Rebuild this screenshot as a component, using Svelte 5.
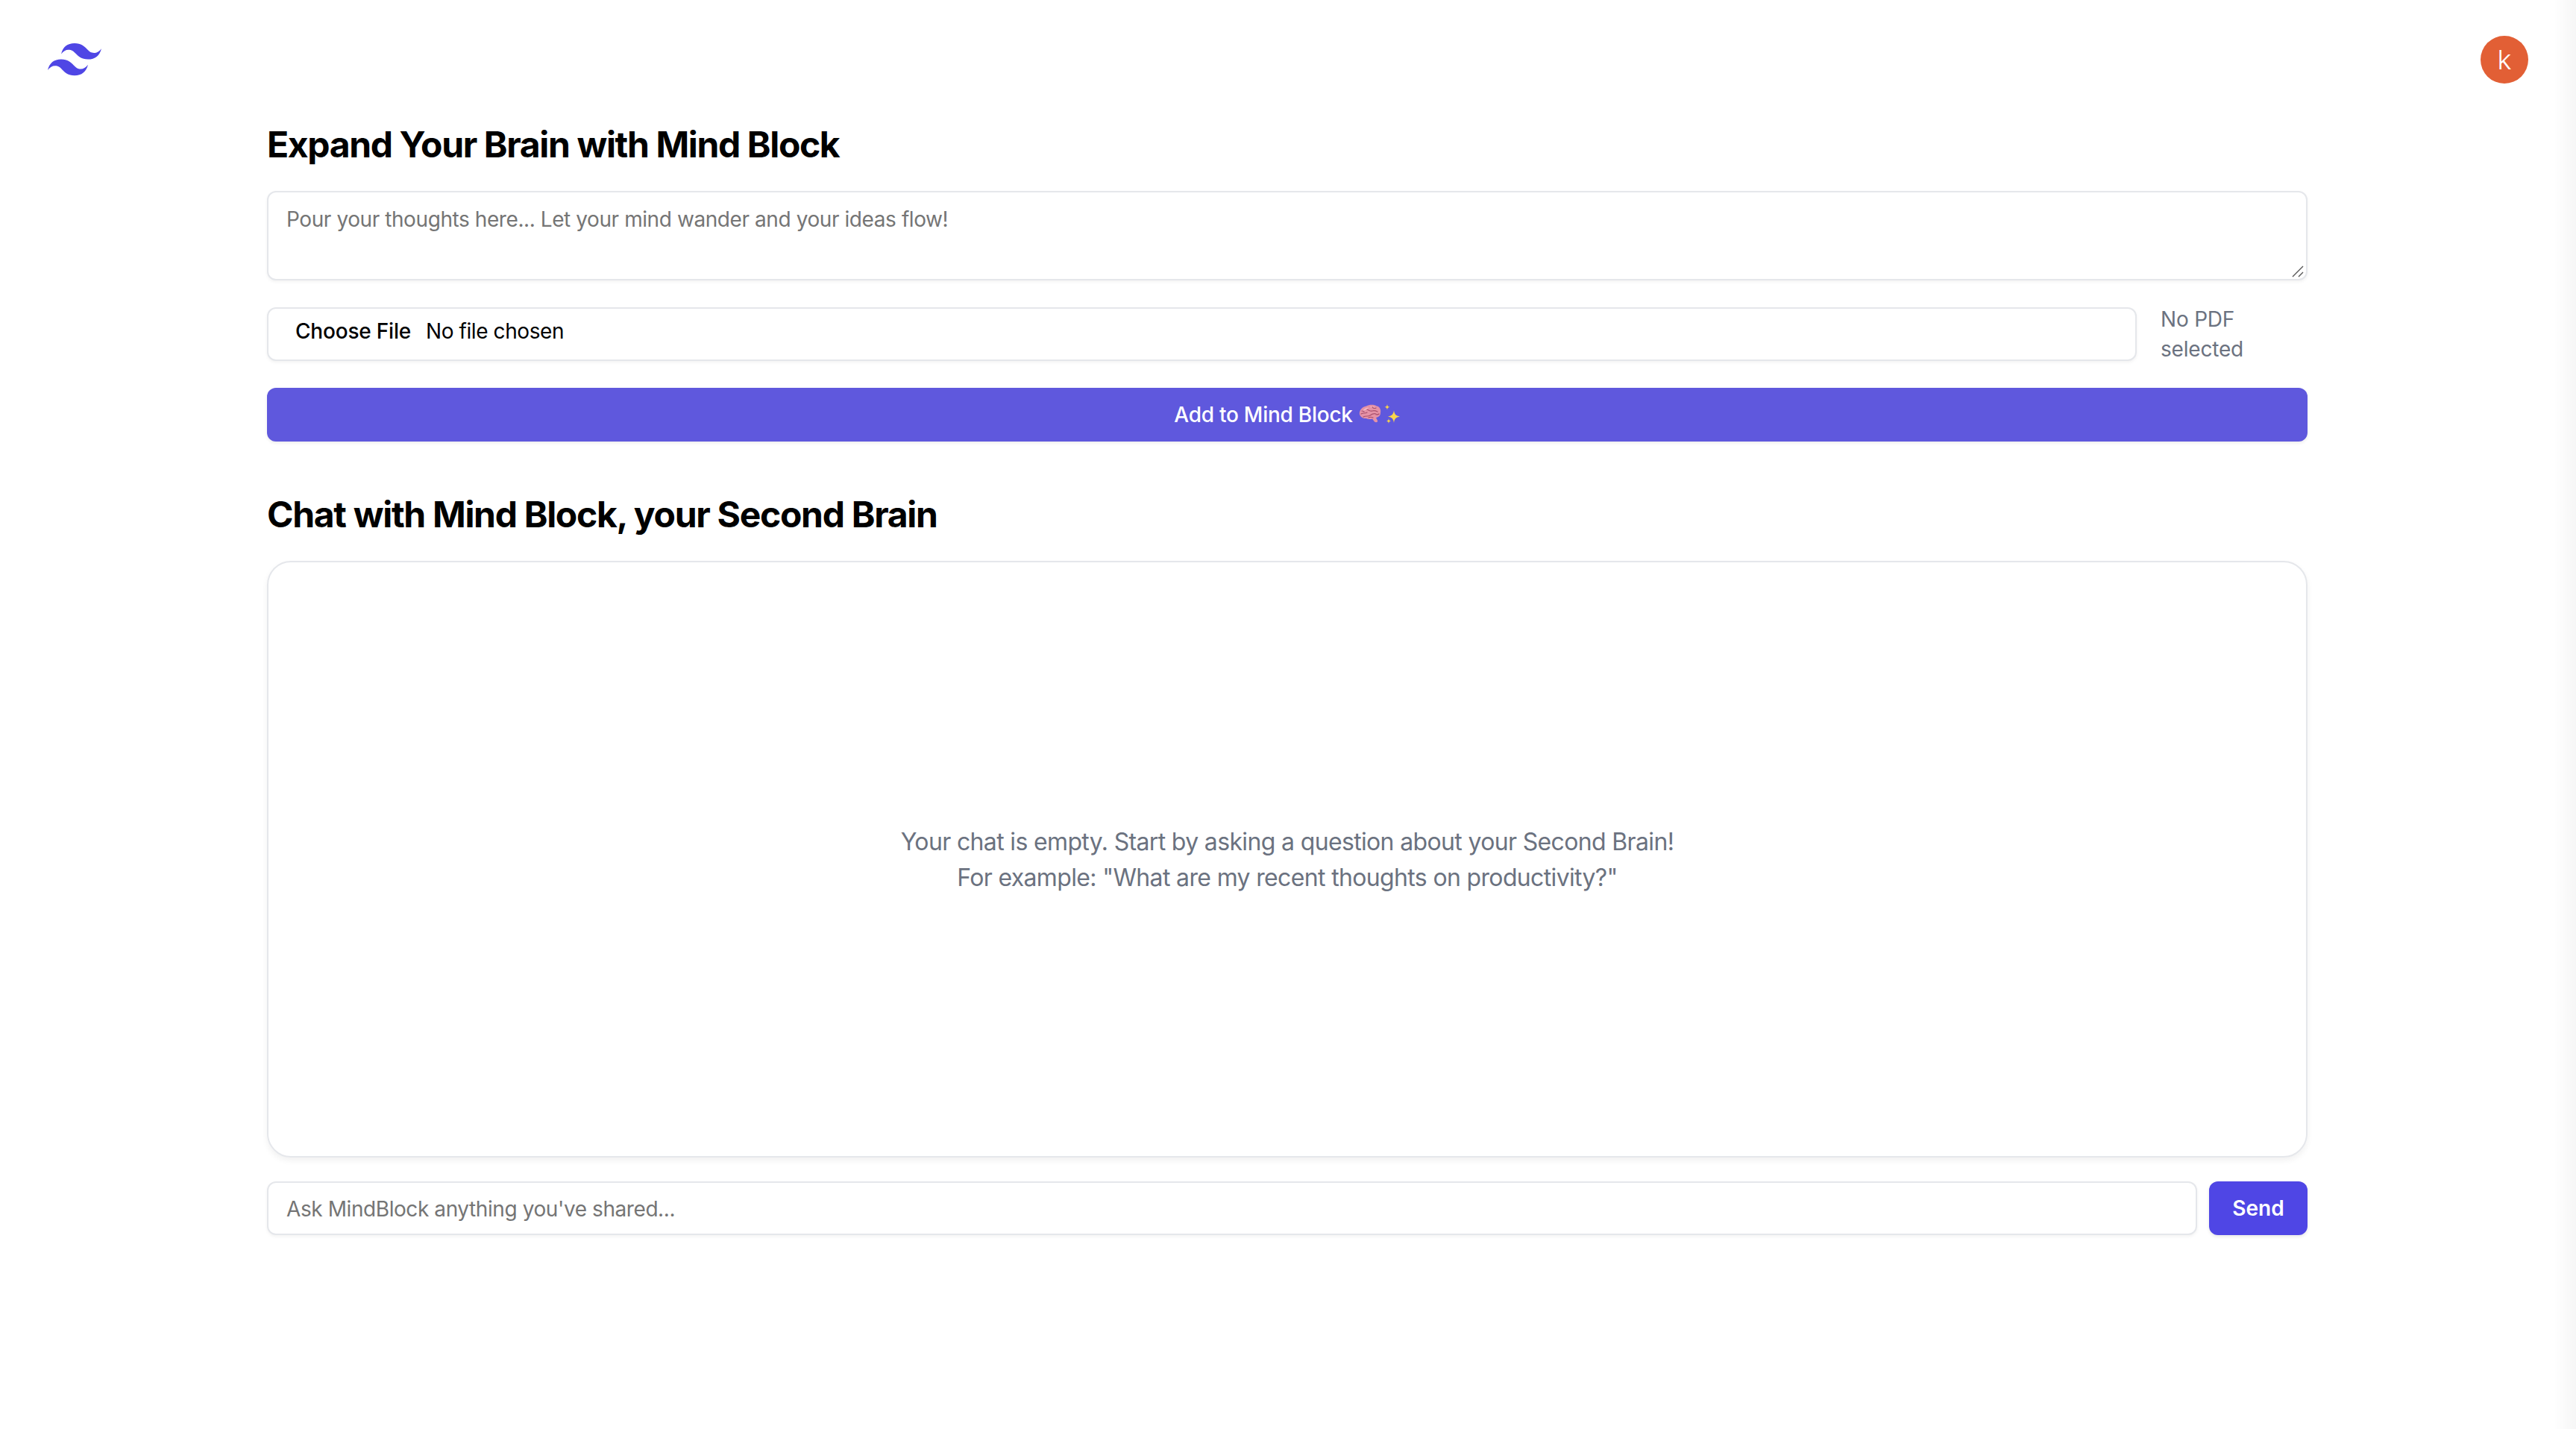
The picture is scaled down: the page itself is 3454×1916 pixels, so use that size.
<script>
  let thought = $state('');
  let question = $state('');
</script>

<div class="page">
  <header class="topbar">
    <svg class="logo" viewBox="0 0 54 33" aria-label="logo">
      <path fill="#4f46e5" fill-rule="evenodd" clip-rule="evenodd" d="M27 0C19.8 0 15.3 3.6 13.5 10.8c2.7-3.6 5.85-4.95 9.45-4.05 2.054.513 3.522 2.004 5.147 3.653C30.744 13.09 33.808 16.2 40.5 16.2c7.2 0 11.7-3.6 13.5-10.8-2.7 3.6-5.85 4.95-9.45 4.05-2.054-.513-3.522-2.004-5.147-3.653C36.756 3.11 33.692 0 27 0zM13.5 16.2C6.3 16.2 1.8 19.8 0 27c2.7-3.6 5.85-4.95 9.45-4.05 2.054.514 3.522 2.004 5.147 3.653C17.244 29.29 20.308 32.4 27 32.4c7.2 0 11.7-3.6 13.5-10.8-2.7 3.6-5.85 4.95-9.45 4.05-2.054-.513-3.522-2.004-5.147-3.653C23.256 19.31 20.192 16.2 13.5 16.2z"/>
    </svg>
    <div class="avatar">k</div>
  </header>

  <main class="content">
    <section class="add">
      <h2>Expand Your Brain with Mind Block</h2>
      <div class="area-wrap">
        <textarea bind:value={thought} placeholder="Pour your thoughts here... Let your mind wander and your ideas flow!"></textarea>
        <svg class="grip" viewBox="0 0 16 16">
          <path d="M1 15 15 1M9 15l6-6" stroke="#555" stroke-width="1.4" fill="none"/>
        </svg>
      </div>
      <div class="file-row">
        <input class="file" type="file" accept="application/pdf" />
        <p class="file-status">No PDF selected</p>
      </div>
      <button class="add-btn">
        Add to Mind Block
        <svg class="emoji" viewBox="0 0 56 28">
          <!-- brain -->
          <path fill="#e592a6" d="M1 14C0 8 5 3 10 2.500 14 0 21 0 24 2.500c4 .5 6 5 5 9 0 4-3 6-6 6.500l2 4c1 2-2 3-4 1.500l-3-4c-3 1-6 .5-8-.5-4 .5-8-2-9-5.500z"/>
          <path fill="#f4bcc8" d="M5 9c2-3 5-4.500 8-4.500-1 2-5 3.500-8 4.500zM15 3.500c3-1 6 0 8 1.500-3 0-6 0-8-1.500z"/>
          <path fill="none" stroke="#a9506c" stroke-width="1.200" stroke-linecap="round" d="M3 13c3-2 5 0 8-2M6 17c3-2 6 0 9-2s5-3 8-2M11 7c3 1 4 3 7 2s5 0 7 1M18 4c1 1 3 2 5 1M4 9c1 0 2 0 3 1M13 18c2-1 4-1 6 0M23 14c1 0 3 0 4-1"/>
          <!-- sparkles -->
          <g transform="translate(5 0)">
            <path fill="#fad64a" d="M42 8c.7 5.500 2.500 7.500 8 8.500-5.500 1-7.300 3-8 8.500-.7-5.500-2.500-7.500-8-8.500 5.500-1 7.300-3 8-8.500z"/>
            <path fill="#fad64a" d="M33 0c.3 2.500 1 3.300 3.300 3.800-2.300.5-3 1.300-3.300 3.800-.3-2.500-1-3.300-3.300-3.800 2.300-.5 3-1.300 3.300-3.800zM35 19c.3 2.200.9 3 3 3.500-2.100.5-2.700 1.300-3 3.500-.3-2.200-.9-3-3-3.500 2.100-.5 2.700-1.300 3-3.500z"/>
          </g>
        </svg>
      </button>
    </section>

    <section class="chat">
      <h2>Chat with Mind Block, your Second Brain</h2>
      <div class="chat-box">
        <p>Your chat is empty. Start by asking a question about your Second Brain!</p>
        <p>For example: "What are my recent thoughts on productivity?"</p>
      </div>
      <form class="ask" onsubmit={(e) => e.preventDefault()}>
        <input type="text" bind:value={question} placeholder="Ask MindBlock anything you've shared..." />
        <button type="submit" class="send">Send</button>
      </form>
    </section>
  </main>

  <div class="edge"></div>
</div>

<style>
  :global(body) {
    margin: 0;
    background: #fff;
  }

  .page {
    min-height: 1916px;
    font-family: Inter, "Liberation Sans", sans-serif;
    color: #000;
  }

  .topbar {
    display: flex;
    align-items: center;
    justify-content: space-between;
    height: 160px;
    padding: 0 64px;
  }

  .logo {
    width: 72px;
    height: 44px;
  }

  .avatar {
    display: flex;
    align-items: center;
    justify-content: center;
    width: 64px;
    height: 64px;
    border-radius: 50%;
    background: #e25f35;
    color: #fff;
    font-size: 36px;
    font-weight: 300;
    line-height: 1;
  }

  .content {
    margin: 0 360px 0 358px;
    display: flex;
    flex-direction: column;
    gap: 62px;
  }

  h2 {
    margin: 0 0 30px;
    padding-top: 2px;
    font-size: 48px;
    line-height: 64px;
    font-weight: 700;
    letter-spacing: -1.36px;
  }

  .chat h2 {
    padding-top: 4px;
    letter-spacing: -1.3px;
  }

  .area-wrap {
    position: relative;
    display: flex;
  }

  textarea,
  .file,
  .ask input {
    box-sizing: border-box;
    border: 2px solid #e5e7eb;
    border-radius: 12px;
    background: #fff;
    box-shadow: 0 2px 4px rgba(0, 0, 0, 0.05);
    font-family: inherit;
    font-size: 28px;
    line-height: 40px;
    letter-spacing: -0.42px;
    outline: none;
  }

  textarea {
    width: 100%;
    height: 120px;
    padding: 16px 24px;
    resize: none;
  }

  textarea::placeholder,
  .ask input::placeholder {
    color: #757575;
    opacity: 1;
  }

  .grip {
    position: absolute;
    right: 5px;
    bottom: 4px;
    width: 16px;
    height: 16px;
  }

  .file-row {
    display: flex;
    align-items: center;
    gap: 32px;
    margin-top: 32px;
  }

  .file {
    flex: 1;
    min-width: 0;
    height: 72px;
    padding: 4px 16px 8px 16px;
    color: #000;
  }

  .file::file-selector-button {
    margin-right: 0;
    padding: 0 20px;
    height: 52px;
    border: 0;
    background: transparent;
    color: #000;
    font-family: inherit;
    font-size: 28px;
    font-weight: 500;
    letter-spacing: -0.2px;
  }

  .file-status {
    width: 197px;
    margin: 0;
    color: #6b7280;
    font-size: 28px;
    line-height: 40px;
    letter-spacing: -0.2px;
  }

  .add-btn {
    display: flex;
    align-items: center;
    justify-content: center;
    gap: 8px;
    width: 100%;
    height: 72px;
    margin-top: 32px;
    border: 0;
    border-radius: 12px;
    background: #5f58dd;
    box-shadow: 0 2px 4px rgba(0, 0, 0, 0.08);
    color: #fff;
    font-family: inherit;
    font-size: 28px;
    font-weight: 500;
    letter-spacing: -0.25px;
  }

  .emoji {
    width: 56px;
    height: 28px;
  }

  .chat-box {
    box-sizing: border-box;
    display: flex;
    flex-direction: column;
    align-items: center;
    justify-content: center;
    height: 800px;
    padding-top: 2px;
    border: 2px solid #e5e7eb;
    border-radius: 32px;
    box-shadow: 0 4px 8px rgba(0, 0, 0, 0.06);
    color: #6b7280;
    font-size: 32px;
    line-height: 48px;
    letter-spacing: -0.65px;
  }

  .chat-box p {
    margin: 0;
  }

  .ask {
    display: flex;
    gap: 16px;
    margin-top: 32px;
  }

  .ask input {
    flex: 1;
    min-width: 0;
    height: 72px;
    padding: 2px 24px 0;
  }

  .send {
    width: 132px;
    height: 72px;
    border: 0;
    border-radius: 12px;
    background: #4f46e5;
    box-shadow: 0 2px 4px rgba(0, 0, 0, 0.1);
    color: #fff;
    font-family: inherit;
    font-size: 28px;
    font-weight: 600;
  }

  .edge {
    position: fixed;
    top: 0;
    right: 0;
    bottom: 0;
    width: 30px;
    background: linear-gradient(to right, rgba(0, 0, 0, 0), rgba(0, 0, 0, 0.035));
    pointer-events: none;
  }
</style>
